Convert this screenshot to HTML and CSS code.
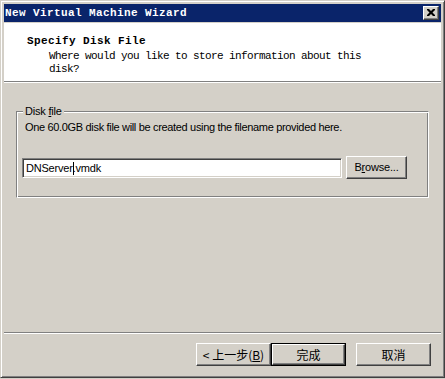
FILE: index.html
```html
<!DOCTYPE html>
<html>
<head>
<meta charset="utf-8">
<link rel="stylesheet" href="styles.css">
</head>
<body>
<div class="window">
  <div class="titlebar">
    <span class="title">New Virtual Machine Wizard</span>
    <span class="close"><svg width="8" height="7" viewBox="0 0 8 7"><path d="M0 0h2l2 2 2-2h2v1l-2.5 2.5L8 6v1H6L4 5 2 7H0V6l2.5-2.5L0 1z" fill="#000"/></svg></span>
  </div>
  <div class="client">
    <div class="header">
      <div class="h-title">Specify Disk File</div>
      <div class="h-sub">Where would you like to store information about this<br>disk?</div>
    </div>
    <div class="sep"></div>
    <div class="body">
      <fieldset class="group">
        <legend class="legend">Disk <u>f</u>ile</legend>
        <p class="desc">One 60.0GB disk file will be created using the filename provided here.</p>
        <div class="row">
          <div class="input">DNServer<span class="caret"></span>.vmdk</div>
          <div class="btn browse">B<u>r</u>owse...</div>
        </div>
      </fieldset>
    </div>
    <div class="sep"></div>
    <div class="buttons">
      <div class="btn cjk">&lt;&nbsp;上一步(<u>B</u>)</div>
      <div class="btn cjk default"><span class="inner">完成</span></div>
      <div class="btn cjk cancel">取消</div>
    </div>
  </div>
</div>
</body>
</html>
```

FILE: styles.css
```css
html, body {
  margin: 0;
  padding: 0;
  background: #d4d0c8;
}
.window {
  width: 445px;
  height: 378px;
  box-sizing: border-box;
  background: #d4d0c8;
  border: 1px solid;
  border-color: #d4d0c8 #404040 #404040 #d4d0c8;
  box-shadow: inset 1px 1px 0 #fff, inset -1px -1px 0 #808080;
  padding: 3px 3px 3px 3px;
  display: flex;
  flex-direction: column;
}
.titlebar {
  height: 18px;
  background: #0a246a;
  display: flex;
  align-items: center;
  justify-content: space-between;
  padding: 0 2px 0 1px;
  flex: none;
}
.title {
  color: #fff;
  font-family: "Liberation Mono", monospace;
  font-weight: bold;
  font-size: 11px;
  letter-spacing: 0.4px;
  line-height: 13px;
}
.close {
  width: 16px;
  height: 14px;
  box-sizing: border-box;
  background: #d4d0c8;
  border: 1px solid;
  border-color: #fff #404040 #404040 #fff;
  box-shadow: inset -1px -1px 0 #808080;
  display: flex;
  align-items: center;
  justify-content: center;
  padding: 0 1px 1px 0;
}
.close svg { display: block; }
.client {
  margin-top: 1px;
  flex: 1;
  display: flex;
  flex-direction: column;
}
.header {
  background: #fff;
  height: 58px;
  box-sizing: border-box;
  padding: 12px 0 0 23px;
  font-family: "Liberation Mono", monospace;
  font-size: 11px;
  line-height: 13px;
  color: #000;
}
.h-title {
  font-weight: bold;
  letter-spacing: 0.4px;
}
.h-sub {
  padding-left: 22px;
  margin-top: 2px;
  letter-spacing: -0.6px;
}
.sep {
  height: 1px;
  background: #808080;
  border-bottom: 1px solid #fff;
  flex: none;
}
.body {
  flex: 1;
  padding: 22px 12px 0 12px;
}
.group {
  margin: 0;
  padding: 0 0 18px 0;
  border: 1px solid #808080;
  border-right-color: #fff;
  border-bottom-color: #fff;
  box-shadow: inset 1px 1px 0 #fff, inset -1px -1px 0 #808080;
  font-family: "Liberation Sans", Arial, sans-serif;
  font-size: 11px;
  line-height: 13px;
  color: #000;
  min-width: 0;
}
.legend {
  margin-left: 6px;
  padding: 0 2px;
  background: #d4d0c8;
  line-height: 13px;
  letter-spacing: -0.2px;
}
.desc {
  margin: 3px 0 0 8px;
  letter-spacing: -0.33px;
}
.row {
  display: flex;
  align-items: center;
  margin: 22px 0 0 5px;
}
.input {
  width: 320px;
  height: 20px;
  box-sizing: border-box;
  background: #fff;
  border: 1px solid;
  border-color: #808080 #fff #fff #808080;
  box-shadow: inset 1px 1px 0 #404040, inset -1px -1px 0 #d4d0c8;
  padding: 3px 0 0 3px;
  font-size: 11px;
  line-height: 13px;
  white-space: nowrap;
  letter-spacing: -0.2px;
}
.caret {
  display: inline-block;
  width: 1px;
  height: 13px;
  background: #000;
  vertical-align: top;
  margin-right: -1px;
}
.btn {
  box-sizing: border-box;
  border: 1px solid;
  border-color: #fff #404040 #404040 #fff;
  box-shadow: inset -1px -1px 0 #808080;
  display: flex;
  align-items: center;
  justify-content: center;
  color: #000;
  background: #d4d0c8;
}
.browse {
  width: 61px;
  height: 23px;
  margin-left: 4px;
  font-family: "Liberation Sans", Arial, sans-serif;
  font-size: 11px;
  letter-spacing: -0.2px;
}
.buttons {
  height: 40px;
  box-sizing: border-box;
  padding: 9px 10px 0 0;
  display: flex;
  justify-content: flex-end;
  align-items: flex-start;
  flex: none;
}
.cjk {
  width: 75px;
  height: 23px;
  font-family: "Noto Sans CJK SC", sans-serif;
  font-size: 12px;
  line-height: 14px;
}
.default {
  border: 1px solid #000;
  box-shadow: none;
  padding: 0;
}
.default .inner {
  width: 100%;
  height: 100%;
  box-sizing: border-box;
  border: 1px solid;
  border-color: #fff #404040 #404040 #fff;
  box-shadow: inset -1px -1px 0 #808080;
  display: flex;
  align-items: center;
  justify-content: center;
}
.cancel {
  margin-left: 10px;
}
```
